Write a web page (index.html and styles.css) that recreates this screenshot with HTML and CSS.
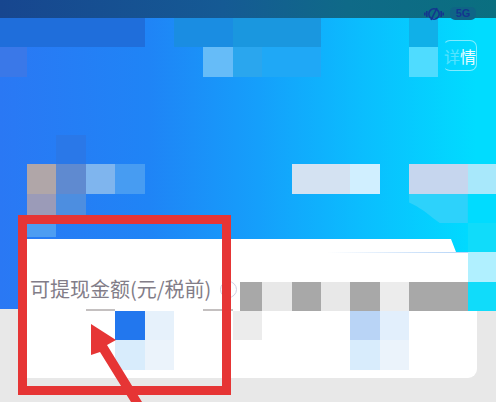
FILE: index.html
```html
<!DOCTYPE html>
<html lang="zh">
<head>
<meta charset="utf-8">
<title>可提现金额</title>
<link rel="stylesheet" href="styles.css">
</head>
<body>
<div class="screen">
  <header class="status">
    <svg class="vibrate" width="20" height="16" viewBox="0 0 20 16" fill="none" stroke="#14358f" stroke-width="1.6">
      <circle cx="10" cy="8" r="5.200"/>
      <path d="M13 2 7 14M2.800 5v6M0.800 6.500v3M17.200 5v6M19.200 6.500v3"/>
    </svg>
    <span class="pill">5G</span>
  </header>
  <section class="hero">
    <div class="detail"><span class="faint">详</span><span>情</span></div>
    <div class="panel">
      <span class="label">可提现金额(元/税前)</span>
      <span class="info"></span>
    </div>
  </section>
  <section class="lower">
    <div class="card"></div>
  </section>

  <div class="mosaic">
    <i class="t band-a c1 r1 s5"></i>
    <i class="t band-b c7 r1 s2"></i>
    <i class="t band-c c9 r1 s3"></i>
    <i class="t band-d c15 r1"></i>
    <i class="t edge c1 r2"></i>
    <i class="t sky c8 r2"></i>
    <i class="t mid c9 r2"></i>
    <i class="t mid2 c10 r2 s2"></i>
    <i class="t aqua c15 r2"></i>
    <i class="t faint-blue c3 r5"></i>
    <i class="t taupe c2 r6"></i>
    <i class="t slate c3 r6"></i>
    <i class="t pale c4 r6"></i>
    <i class="t azure c5 r6"></i>
    <i class="t mist c11 r6 s2"></i>
    <i class="t ice c13 r6"></i>
    <i class="t haze c15 r6 s2"></i>
    <i class="t frost c17 r6"></i>
    <i class="t lilac c2 r7"></i>
    <i class="t steel c3 r7"></i>
    <i class="t curve c15 r7 s2"></i>
    <i class="t cy1 c17 r7"></i>
    <i class="t short c2 r8"></i>
    <i class="t cy2 c17 r8"></i>
    <i class="t cy3 c17 r9"></i>
    <i class="t cy2 c17 r10"></i>
    <i class="t smear c4 r10"></i>
    <i class="t smear c8 r10"></i>
    <i class="t gray notch c9 r10"></i>
    <i class="t light c10 r10"></i>
    <i class="t gray c11 r10"></i>
    <i class="t light c12 r10"></i>
    <i class="t gray c13 r10"></i>
    <i class="t light2 c14 r10"></i>
    <i class="t gray c15 r10 s2"></i>
    <i class="t royal c5 r11"></i>
    <i class="t wash c6 r11"></i>
    <i class="t light2 c9 r11"></i>
    <i class="t b1 c13 r11"></i>
    <i class="t b2 c14 r11"></i>
    <i class="t b3 c5 r12"></i>
    <i class="t b4 c6 r12"></i>
    <i class="t b3 c13 r12"></i>
    <i class="t b4 c14 r12"></i>
  </div>

  <div class="frame"></div>
  <svg class="arrow" width="496" height="402" viewBox="0 0 496 402">
    <polygon points="91,324 116,340 107,345 142,402 131,402 100,352 91,355" fill="#e63535"/>
  </svg>
</div>
</body>
</html>
```

FILE: styles.css
```css
html, body {
  margin: 0;
  padding: 0;
  height: 100%;
  background: #e8e8e8;
  overflow: hidden;
}
.screen {
  position: relative;
  width: 496px;
  height: 402px;
  display: flex;
  flex-direction: column;
  overflow: hidden;
  filter: blur(0.5px);
  font-family: "Noto Sans CJK SC", "Noto Sans", sans-serif;
}
.status {
  height: 18px;
  flex: none;
  display: flex;
  align-items: flex-start;
  justify-content: flex-end;
  gap: 6px;
  padding: 6px 20px 0 0;
  box-sizing: border-box;
  background: linear-gradient(90deg, #17468f 0%, #155a94 45%, #0f6a88 70%, #0a6f80 100%);
  position: relative;
  z-index: 1;
}
.pill {
  width: 26px;
  height: 13px;
  margin-top: 1px;
  border-radius: 5px;
  background: #0f6486;
  color: #14358f;
  font: bold 11px/13px "Liberation Sans", sans-serif;
  text-align: center;
}
.hero {
  height: 291px;
  flex: none;
  display: flex;
  flex-direction: column;
  justify-content: space-between;
  background: linear-gradient(90deg, #2a78f4 0%, #1f84f6 30%, #159ffb 52%, #0bbcfe 72%, #00dcff 96%);
}
.detail {
  align-self: flex-end;
  width: 29px;
  height: 29px;
  margin: 22px 19px 0 0;
  padding-left: 3px;
  display: flex;
  justify-content: flex-end;
  align-items: center;
  border: 1px solid rgba(255, 255, 255, 0.5);
  border-left-color: transparent;
  border-radius: 7px;
  color: #eafcff;
  font-size: 16px;
  line-height: 1;
  white-space: nowrap;
}
.faint { opacity: 0.35; }
.panel {
  height: 70px;
  margin: 0 28px 0 27px;
  padding: 0 0 8px 3px;
  box-sizing: border-box;
  display: flex;
  align-items: flex-end;
  gap: 9px;
  background: linear-gradient(90deg, transparent 68%, #bcd8f8 96%) 0 13px / 100% 1px no-repeat, #fff;
  clip-path: polygon(0 0, 424px 0, 429px 13px, 441px 13px, 441px 100%, 0 100%);
}
.label {
  color: #827d88;
  font-size: 20px;
  line-height: 24px;
  white-space: nowrap;
}
.info {
  width: 15px;
  height: 15px;
  margin-bottom: 3px;
  border: 1.500px solid #cfcfe2;
  border-radius: 50%;
}
.lower {
  flex: 1;
  padding-left: 27px;
}
.card {
  width: 450px;
  height: 69px;
  background: #fff;
  border-bottom-right-radius: 9px;
}
.mosaic {
  position: absolute;
  left: -2.4px;
  top: 18px;
  display: grid;
  grid-template-columns: repeat(17, 29.4px);
  grid-template-rows: repeat(12, 29.3px);
}
.t { display: block; }
.s2 { grid-column-end: span 2; }
.s3 { grid-column-end: span 3; }
.s5 { grid-column-end: span 5; }
.c1 { grid-column-start: 1; }
.c2 { grid-column-start: 2; }
.c3 { grid-column-start: 3; }
.c4 { grid-column-start: 4; }
.c5 { grid-column-start: 5; }
.c6 { grid-column-start: 6; }
.c7 { grid-column-start: 7; }
.c8 { grid-column-start: 8; }
.c9 { grid-column-start: 9; }
.c10 { grid-column-start: 10; }
.c11 { grid-column-start: 11; }
.c12 { grid-column-start: 12; }
.c13 { grid-column-start: 13; }
.c14 { grid-column-start: 14; }
.c15 { grid-column-start: 15; }
.c17 { grid-column-start: 17; }
.r1 { grid-row-start: 1; }
.r2 { grid-row-start: 2; }
.r5 { grid-row-start: 5; }
.r6 { grid-row-start: 6; }
.r7 { grid-row-start: 7; }
.r8 { grid-row-start: 8; }
.r9 { grid-row-start: 9; }
.r10 { grid-row-start: 10; }
.r11 { grid-row-start: 11; }
.r12 { grid-row-start: 12; }
.band-a { background: #1f6edb; }
.band-b { background: #1a8de2; }
.band-c { background: #1a97df; }
.band-d { background: #10b0e8; }
.edge { background: #3a78e8; }
.sky { background: #66bcf8; }
.mid { background: #2aa6ee; }
.mid2 { background: #1fa8f6; }
.aqua { background: #4fdcff; }
.faint-blue { background: #2a78e8; }
.taupe { background: #b0a6a8; }
.slate { background: #5f8ad0; }
.pale { background: #7fb5ee; }
.azure { background: #479cf2; }
.mist { background: #d4e2f2; }
.ice { background: #d0efff; }
.haze { background: #c6d6ee; }
.frost { background: #a8e8fb; }
.lilac { background: #9b9bb8; }
.steel { background: #4d8ee0; }
.curve {
  background: #2dd2fb;
  clip-path: polygon(0 0, 100% 0, 100% 100%, 52% 100%, 40% 82%, 26% 60%, 12% 42%, 0 30%);
}
.cy1 { background: #00dcff; }
.cy2 { background: #10dcfa; }
.cy3 { background: #b0f0ff; }
.short { background: #4d9df2; height: 14px; }
.smear { background: #c4c0c0; height: 2px; align-self: end; }
.gray { background: #a8a8a8; }
.notch { margin-left: 7px; }
.light { background: #e8e8e8; }
.light2 { background: #ececec; }
.royal { background: #2277ee; }
.wash { background: #e6f1fb; }
.b1 { background: #b9d4f6; }
.b2 { background: #e2effc; }
.b3 { background: #d8ecfc; }
.b4 { background: #ebf3fb; }
.frame {
  position: absolute;
  left: 18px;
  top: 215px;
  width: 195px;
  height: 162px;
  border: 9.500px solid #e63535;
}
.arrow {
  position: absolute;
  left: 0;
  top: 0;
}
```
